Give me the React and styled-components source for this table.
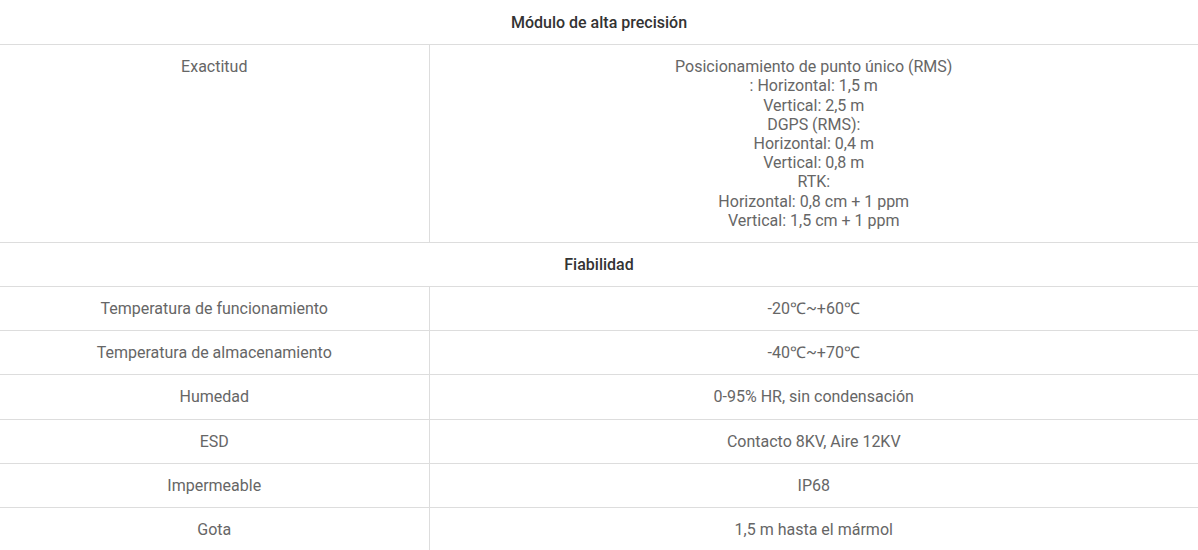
import React from "react";
import styled, { createGlobalStyle } from "styled-components";

const Global = createGlobalStyle`
  html, body { margin: 0; padding: 0; background: #fff; }
  body { font-family: Roboto, "Liberation Sans", Arial, sans-serif; padding-top: 1px; }
`;

const Table = styled.table`
  width: 1198px;
  border-collapse: collapse;
  font-size: 16px;
  line-height: 1.2;
  color: #666;
`;

const Row = styled.tr`
  border-bottom: 1px solid #dddddd;
`;

const HeadCell = styled.td`
  text-align: center;
  padding: 12px 10px;
  font-weight: 500;
  color: #333;
`;

const LabelCell = styled.td`
  width: 429px;
  box-sizing: border-box;
  text-align: center;
  vertical-align: top;
  padding: 12px 10px;
  border-right: 1px solid #dddddd;
`;

const ValueCell = styled.td`
  text-align: center;
  vertical-align: top;
  padding: 12px 10px;
`;

const sections = [
  {
    title: "Módulo de alta precisión",
    rows: [
      [
        "Exactitud",
        [
          "Posicionamiento de punto único (RMS)",
          ": Horizontal: 1,5 m",
          "Vertical: 2,5 m",
          "DGPS (RMS):",
          "Horizontal: 0,4 m",
          "Vertical: 0,8 m",
          "RTK:",
          "Horizontal: 0,8 cm + 1 ppm",
          "Vertical: 1,5 cm + 1 ppm",
        ],
      ],
    ],
  },
  {
    title: "Fiabilidad",
    rows: [
      ["Temperatura de funcionamiento", ["-20℃~+60℃"]],
      ["Temperatura de almacenamiento", ["-40℃~+70℃"]],
      ["Humedad", ["0-95% HR, sin condensación"]],
      ["ESD", ["Contacto 8KV, Aire 12KV"]],
      ["Impermeable", ["IP68"]],
      ["Gota", ["1,5 m hasta el mármol"]],
    ],
  },
];

export default function App() {
  return (
    <>
      <Global />
      <Table>
        <tbody>
          {sections.map((s) => (
            <React.Fragment key={s.title}>
              <Row>
                <HeadCell colSpan={2}>{s.title}</HeadCell>
              </Row>
              {s.rows.map(([label, lines]) => (
                <Row key={label}>
                  <LabelCell>{label}</LabelCell>
                  <ValueCell>
                    {lines.map((l, i) => (
                      <React.Fragment key={i}>
                        {i > 0 && <br />}
                        {l}
                      </React.Fragment>
                    ))}
                  </ValueCell>
                </Row>
              ))}
            </React.Fragment>
          ))}
        </tbody>
      </Table>
    </>
  );
}
